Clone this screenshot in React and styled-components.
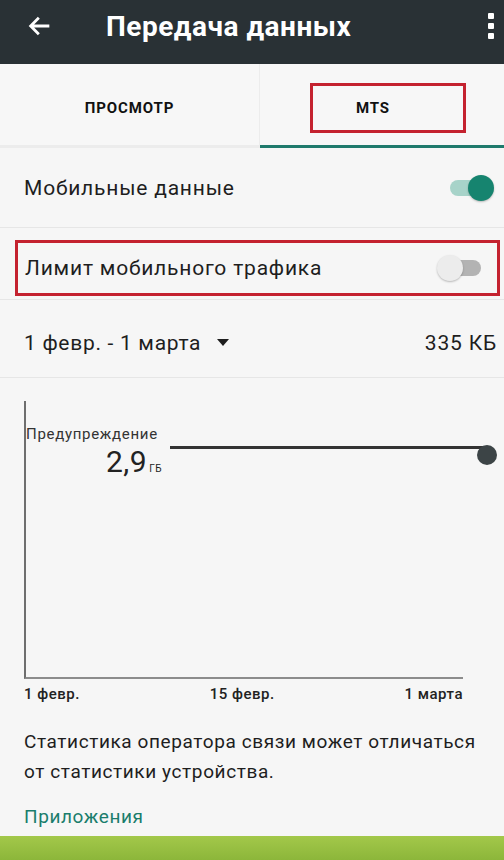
import React from 'react'
import styled, { createGlobalStyle } from 'styled-components'

const GlobalStyle = createGlobalStyle`
   html, body {
      margin: 0;
      padding: 0;
      background: #f6f6f6;
      font-family: Roboto, "Noto Sans", Arial, sans-serif;
   }
   * {
      box-sizing: border-box;
   }
`

const App = () => {
   return (
      <Screen>
         <GlobalStyle />
         <Toolbar>
            <BackIcon viewBox="0 0 24 24">
               <path
                  d="M20 12H5M11 5l-7 7 7 7"
                  fill="none"
                  stroke="#fff"
                  strokeWidth="2.4"
               />
            </BackIcon>
            <Title>Передача данных</Title>
            <MenuDots>
               <Dot />
               <Dot />
               <Dot />
            </MenuDots>
         </Toolbar>

         <Tabs>
            <Tab width="260px">ПРОСМОТР</Tab>
            <Tab active>
               <Highlight>MTS</Highlight>
            </Tab>
         </Tabs>

         <Row height="80px">
            <RowLabel>Мобильные данные</RowLabel>
            <Switch on />
         </Row>

         <Row height="72px" pad="12px 4px 4px 15px">
            <LimitBox>
               <RowLabel>Лимит мобильного трафика</RowLabel>
               <Switch />
            </LimitBox>
         </Row>

         <Row height="78px" pad="8px 7px 0 24px">
            <PeriodPicker>
               1 февр. - 1 марта
               <Caret />
            </PeriodPicker>
            <RowLabel>335 КБ</RowLabel>
         </Row>

         <ChartArea>
            <Chart>
               <WarningLabel>Предупреждение</WarningLabel>
               <WarningValue>
                  2,9<small>ГБ</small>
               </WarningValue>
               <WarningLine />
               <WarningHandle />
            </Chart>
            <AxisLabels>
               <span>1 февр.</span>
               <span>15 февр.</span>
               <span>1 марта</span>
            </AxisLabels>
         </ChartArea>

         <Note>
            Статистика оператора связи может отличаться от статистики
            устройства.
         </Note>

         <SectionTitle>Приложения</SectionTitle>
         <BottomBar />
      </Screen>
   )
}

export default App

const Screen = styled.div`
   width: 504px;
   height: 860px;
   display: flex;
   flex-direction: column;
   overflow: hidden;
   background: #f6f6f6;
   color: #1e1e1e;
`

const Toolbar = styled.div`
   height: 64px;
   flex-shrink: 0;
   display: flex;
   align-items: center;
   padding: 0 0 12px 26px;
   background: #293135;
`

const BackIcon = styled.svg`
   width: 28px;
   height: 28px;
`

const Title = styled.div`
   margin-left: 52px;
   flex: 1;
   color: #fff;
   font-size: 28px;
   font-weight: 700;
   letter-spacing: 0.5px;
`

const MenuDots = styled.div`
   display: flex;
   flex-direction: column;
   gap: 4px;
   padding-right: 10px;
`

const Dot = styled.span`
   width: 6px;
   height: 6px;
   border-radius: 1px;
   background: #fff;
`

const Tabs = styled.div`
   height: 84px;
   flex-shrink: 0;
   display: flex;
   background: #f7f7f7;
`

const Tab = styled.div`
   flex: ${({ width }) => (width ? `0 0 ${width}` : '1')};
   display: flex;
   align-items: center;
   justify-content: center;
   padding-top: 6px;
   font-size: 15px;
   font-weight: 700;
   letter-spacing: 0.9px;
   color: #111;
   border-right: ${({ active }) => (active ? 'none' : '1px solid #ececec')};
   border-bottom: 3px solid ${({ active }) => (active ? '#1f7a6c' : '#ececec')};
`

const Highlight = styled.div`
   width: 156px;
   height: 50px;
   margin-left: 12px;
   display: flex;
   align-items: center;
   justify-content: center;
   border: 3px solid #c4222f;
   padding-right: 30px;
`

const Row = styled.div`
   height: ${({ height }) => height};
   flex-shrink: 0;
   display: flex;
   align-items: center;
   justify-content: space-between;
   padding: ${({ pad }) => pad || '0 10px 0 24px'};
   border-bottom: 1px solid #e6e6e6;
`

const RowLabel = styled.div`
   font-size: 21px;
   letter-spacing: 0.8px;
   color: #1e1e1e;
`

const LimitBox = styled.div`
   width: 100%;
   height: 56px;
   display: flex;
   align-items: center;
   justify-content: space-between;
   padding: 0 12px 0 7px;
   border: 3px solid #c4222f;
`

const Switch = styled.div`
   position: relative;
   width: 48px;
   height: 30px;
   &::before {
      content: '';
      position: absolute;
      left: 4px;
      right: 4px;
      top: 7px;
      height: 16px;
      border-radius: 8px;
      background: ${({ on }) => (on ? '#a7d3c9' : '#b3b3b3')};
   }
   &::after {
      content: '';
      position: absolute;
      top: 2px;
      left: ${({ on }) => (on ? '22px' : '0')};
      width: 26px;
      height: 26px;
      border-radius: 50%;
      background: ${({ on }) => (on ? '#16846f' : '#ececec')};
      box-shadow: 0 1px 2px rgba(0, 0, 0, 0.25);
   }
`

const PeriodPicker = styled.div`
   display: flex;
   align-items: center;
   gap: 16px;
   font-size: 21px;
   letter-spacing: 0.7px;
`

const Caret = styled.span`
   width: 0;
   height: 0;
   border-left: 6px solid transparent;
   border-right: 6px solid transparent;
   border-top: 7px solid #1e1e1e;
`

const ChartArea = styled.div`
   padding: 23px 41px 0 24px;
   flex-shrink: 0;
`

const Chart = styled.div`
   position: relative;
   height: 278px;
   border-left: 2px solid #6e6e6e;
   border-bottom: 2px solid #8c8c8c;
`

const WarningLabel = styled.div`
   position: absolute;
   left: 0;
   top: 24px;
   font-size: 15px;
   color: #333;
   letter-spacing: 0.7px;
`

const WarningValue = styled.div`
   position: absolute;
   left: 80px;
   top: 43px;
   font-size: 30px;
   letter-spacing: 0.5px;
   color: #222;
   small {
      font-size: 10px;
      margin-left: 2px;
   }
`

const WarningLine = styled.div`
   position: absolute;
   left: 144px;
   right: -24px;
   top: 45px;
   height: 3px;
   background: #333;
`

const WarningHandle = styled.div`
   position: absolute;
   right: -34px;
   top: 44px;
   width: 20px;
   height: 20px;
   border-radius: 50%;
   background: #3c4446;
`

const AxisLabels = styled.div`
   display: flex;
   justify-content: space-between;
   padding-top: 6px;
   font-size: 15px;
   letter-spacing: 0.5px;
   font-weight: 500;
   color: #222;
`

const Note = styled.div`
   padding: 24px 24px 0 24px;
   font-size: 19px;
   letter-spacing: 0.6px;
   line-height: 30px;
   color: #1e1e1e;
`

const SectionTitle = styled.div`
   padding: 18px 24px 0 24px;
   font-size: 19px;
   letter-spacing: 0.6px;
   color: #1a7d6c;
   height: 49px;
`

const BottomBar = styled.div`
   flex: 1;
   background: linear-gradient(#a3c84a, #8cb63a);
`
